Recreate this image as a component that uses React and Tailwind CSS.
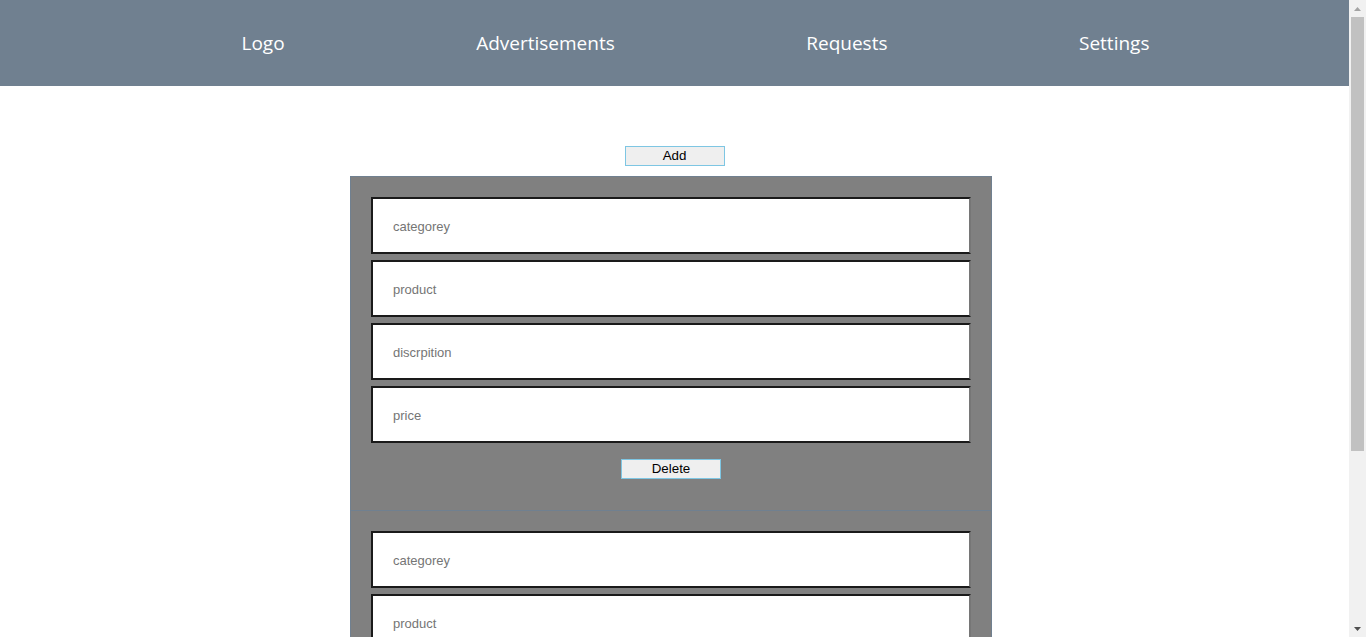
import React from 'react';

const NAV = ['Logo', 'Advertisements', 'Requests', 'Settings'];
const FIELDS = ['categorey', 'product', 'discrpition', 'price'];

const BTN =
  'w-[100px] h-5 bg-[#efefef] border border-[#7ec6e3] text-[13.33px] leading-none text-black font-["Liberation_Sans",Arial,sans-serif]';

function AdCard() {
  return (
    <div className="px-5 pt-5 pb-[31px] border-b border-[#708090] flex flex-col items-center">
      <div className="flex flex-col gap-[6px] w-[600px]">
        {FIELDS.map((f) => (
          <input
            key={f}
            placeholder={f}
            className="h-[57px] w-[600px] bg-white border-2 border-[#1a1a1a] border-r-[#767676] px-5 pt-px text-[13px] text-black placeholder:text-[#757575] font-['Liberation_Sans',Arial,sans-serif] outline-none"
          />
        ))}
      </div>
      <button className={`${BTN} mt-4`}>Delete</button>
    </div>
  );
}

// window scrollbar as it shows in the reference
function Scrollbar() {
  return (
    <div className="w-[17px] h-full bg-[#f1f1f1] flex flex-col items-center flex-shrink-0">
      <div className="h-[17px] flex items-center justify-center">
        <svg width="7" height="4" viewBox="0 0 7 4"><path d="M0 4 L3.5 0 L7 4 Z" fill="#a3a3a3" /></svg>
      </div>
      <div className="w-[13px] h-[434px] bg-[#c1c1c1]" />
      <div className="flex-1" />
      <div className="h-[17px] flex items-center justify-center">
        <svg width="7" height="4" viewBox="0 0 7 4"><path d="M0 0 L7 0 L3.5 4 Z" fill="#505050" /></svg>
      </div>
    </div>
  );
}

export default function App() {
  return (
    <div className="h-screen flex overflow-hidden bg-white">
      <div className="flex-1 overflow-hidden">
        <header className="h-[86px] bg-[#708090] flex items-center pt-px">
          <ul className="flex-1 flex justify-evenly pl-[50px] pr-2 list-none m-0">
            {NAV.map((n) => (
              <li key={n} className="text-white text-[19px] font-['Open_Sans',sans-serif]">
                {n}
              </li>
            ))}
          </ul>
        </header>

        <div className="flex justify-center pt-[60px] pb-[10px]">
          <button className={BTN}>Add</button>
        </div>

        <div className="pl-[350px]">
          <div className="w-[642px] bg-[#808080] border-x border-t border-[#708090]">
            <AdCard />
            <AdCard />
          </div>
        </div>
      </div>
      <Scrollbar />
    </div>
  );
}
